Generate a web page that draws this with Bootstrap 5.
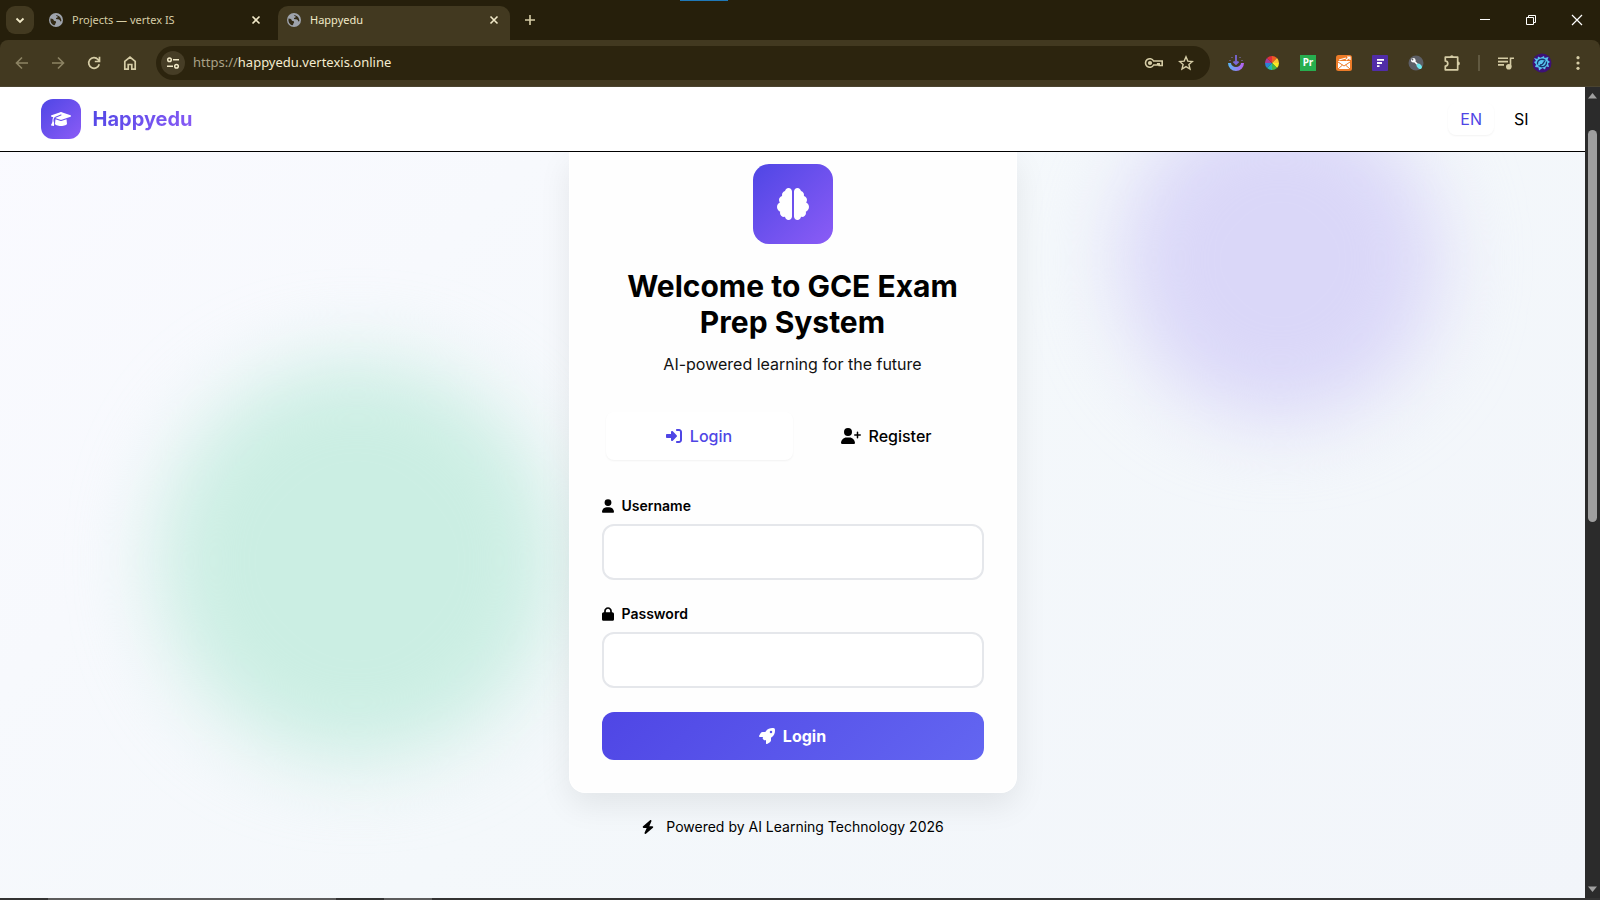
<!DOCTYPE html>
<html lang="en">
<head>
<meta charset="utf-8">
<meta name="viewport" content="width=device-width, initial-scale=1">
<title>Happyedu</title>
<link href="https://cdn.jsdelivr.net/npm/bootstrap@5.3.0/dist/css/bootstrap.min.css" rel="stylesheet">
<script defer src="https://cdn.jsdelivr.net/npm/bootstrap@5.3.0/dist/js/bootstrap.bundle.min.js"></script>
<style>
  :root { --indigo: #4f46e5; --violet: #8b5cf6; --strip: #261f0b; --bar: #423920; --cream: #d6cda6; }
  body { height: 100vh; font-family: Inter, "Liberation Sans", sans-serif; color: #000; background: var(--strip); overflow: hidden; }
  svg { display: block; flex: none; }
  button { color: inherit; }
  .ui-font { font-family: "Noto Sans", "Open Sans", sans-serif; }
  .plain { background: none; border: 0; padding: 0; display: flex; align-items: center; justify-content: center; }

  /* browser frame */
  .strip { height: 40px; padding: 6px 0 0 6px; color: var(--cream); font-size: 11px; }
  .tab-search { width: 28px; height: 28px; border-radius: 9px; background: var(--bar); color: #f1e9c8; }
  .win-tab { width: 232px; height: 34px; padding: 0 10px 6px 8px; gap: 8px; }
  .win-tab.idle { margin-left: 6px; width: 232px; }
  .win-tab.current { margin-left: 6px; background: var(--bar); color: #f1e9c8; border-radius: 10px 10px 0 0; }
  .win-tab svg { color: #9ea3ac; }
  .win-tab button svg { color: #f1e9c8; }
  .new-tab { width: 40px; height: 28px; }
  .win-btns { color: #fff; height: 28px; }
  .win-btns button { width: 46px; height: 28px; }
  .accent { left: 680px; top: 0; width: 48px; height: 1px; background: #1f78b8; }
  .toolbar { height: 47px; background: var(--bar); color: var(--cream); padding: 0 4px; border-bottom: 1px solid #4b4430; border-radius: 8px 8px 0 0; }
  .toolbar > .plain, .exts .plain { width: 36px; height: 34px; }
  .dim { opacity: .5; }
  .omni { height: 34px; border-radius: 17px; background: #2c240e; padding: 0 8px 0 5px; margin-left: 8px; margin-right: 8px; font-size: 13px; }
  .omni .plain { width: 32px; }
  .omni .site { width: 24px; height: 24px; border-radius: 50%; background: #463d26; margin-right: 8px; }
  .omni .scheme { color: #aaa287; }
  .omni input { background: none; border: 0; outline: 0; padding: 0; color: #f4ecd0; min-width: 0; }
  .divider { width: 2px; height: 16px; margin: 0 8px; background: #615940; }
  .pr { width: 16px; height: 16px; background: #27ae4f; color: #fff; font-size: 10px; line-height: 14px; font-weight: 700; }

  /* page */
  .view { min-height: 0; background: linear-gradient(135deg, #fafaff 0%, #f4f8fb 50%, #f2f5fa 100%); }
  .site-head { height: 65px; background: #fff; border-bottom: 1px solid #000; z-index: 2; }
  .head-inner { max-width: 1536px; padding: 0 16px; }
  .brand { gap: 12px; }
  .logo-box { width: 40px; height: 40px; border-radius: 12px; }
  .grad { background: linear-gradient(135deg, var(--indigo), var(--violet)); color: #fff; }
  .brand-name { font-size: 20px; font-weight: 700; line-height: 28px; background: linear-gradient(135deg, var(--indigo), var(--violet)); -webkit-background-clip: text; background-clip: text; color: transparent; }
  .lang { padding: 4px 12px; border-radius: 8px; font-size: 16px; line-height: 24px; }
  .raised { color: var(--indigo); background: #fff; box-shadow: 0 1px 2px rgba(0,0,0,.05); }
  .orb { border-radius: 50%; filter: blur(40px); }
  .orb-violet { width: 320px; height: 320px; right: 145px; top: 13px; background: #dad7f8; }
  .orb-green { width: 400px; height: 400px; left: 157px; bottom: 137px; background: #cbeee3; }
  .login-card { max-width: 448px; border: 1px solid #fff; border-top: 0; border-radius: 0 0 16px 16px; background: #fefefe; padding: 12px 32px 32px; box-shadow: 0 12px 32px rgba(0,0,0,.08); }
  .hero-icon { width: 80px; height: 80px; border-radius: 16px; margin-bottom: 24px; }
  h1 { font-size: 30px; line-height: 36px; font-weight: 700; margin-bottom: 12px; }
  .tagline { line-height: 24px; margin-bottom: 32px; color: #111; }
  .switcher { padding: 4px; margin-bottom: 32px; }
  .switcher button { height: 48px; border-radius: 8px; font-weight: 500; gap: 8px; }
  .field-label { font-size: 14px; line-height: 20px; font-weight: 600; gap: 8px; margin-bottom: 8px; }
  .field { height: 56px; border: 2px solid #e5e7eb; border-radius: 12px; background: #fff; margin-bottom: 24px; }
  .submit { height: 48px; border-radius: 12px; font-weight: 700; gap: 8px; color: #fff; background: linear-gradient(135deg, var(--indigo), #6366f1); }
  .powered { font-size: 14px; line-height: 20px; margin-top: 24px; gap: 11px; }
  .scroller { width: 15px; background: #2b2b2b; padding: 6px 0; color: #a0a0a0; }
  .thumb { width: 9px; flex: 0 0 49%; border-radius: 5px; background: #9f9f9f; margin-top: 31px; }
  .taskbar { height: 2px; background: #333; }
  .taskbar i { height: 2px; background: #5c5c5c; }
</style>
</head>
<body class="d-flex flex-column">
<svg width="0" height="0" class="position-absolute" aria-hidden="true">
  <symbol id="globe" viewBox="0 0 16 16"><circle cx="8" cy="8" r="7" fill="currentColor"/><path d="M2.500 6.500c2 .2 3 .6 3.200 1.800.2 1 1.600.5 2.200 1.200.7 1-.4 1.500-.6 2.400-.1.800-.8 1.200-1.400 1.300-2.500-.9-3.900-3.600-3.400-6.700zM7.500 2.800c1 .1.600 1.400 1.600 1.500 1.200.1.600 1.600-.5 1.500-1 0-.9 1.400.3 1.500 1.500.1 3 .2 3.200 1.500.1.900.8.600 1.300.2 0-2.500-1.600-4.700-3.700-5.500z" fill="#332b17"/></symbol>
  <symbol id="cross" viewBox="0 0 12 12"><path d="M2.500 2.500l7 7m0-7l-7 7" stroke="currentColor" stroke-width="1.600" fill="none"/></symbol>
</svg>

<header class="ui-font">
  <div class="strip d-flex position-relative">
    <span class="accent position-absolute"></span>
    <button class="plain tab-search" aria-label="Search tabs"><svg width="12" height="12" viewBox="0 0 12 12"><path d="M2.500 4.500L6 8l3.500-3.500" fill="none" stroke="currentColor" stroke-width="1.800"/></svg></button>
    <div class="win-tab idle d-flex align-items-center"><svg width="16" height="16"><use href="#globe"/></svg><span class="flex-grow-1">Projects — vertex IS</span><button class="plain" aria-label="Close tab"><svg width="12" height="12"><use href="#cross"/></svg></button></div>
    <div class="win-tab current d-flex align-items-center"><svg width="16" height="16"><use href="#globe"/></svg><span class="flex-grow-1">Happyedu</span><button class="plain" aria-label="Close tab"><svg width="12" height="12"><use href="#cross"/></svg></button></div>
    <button class="plain new-tab" aria-label="New tab"><svg width="12" height="12" viewBox="0 0 12 12"><path d="M6 1v10M1 6h10" stroke="currentColor" stroke-width="1.600"/></svg></button>
    <div class="win-btns d-flex ms-auto">
      <button class="plain" aria-label="Minimize"><svg width="12" height="12" viewBox="0 0 12 12"><path d="M1 5.500h10" stroke="currentColor"/></svg></button>
      <button class="plain" aria-label="Restore"><svg width="12" height="12" viewBox="0 0 12 12" fill="none" stroke="currentColor"><path d="M1.500 3.500h7v7h-7zM3.500 3V1.500h7v7H9"/></svg></button>
      <button class="plain" aria-label="Close"><svg width="12" height="12" viewBox="0 0 12 12"><path d="M1 1l10 10M11 1L1 11" stroke="currentColor" stroke-width="1.200"/></svg></button>
    </div>
  </div>

  <div class="toolbar d-flex align-items-center">
    <button class="plain dim" aria-label="Back"><svg width="16" height="16" viewBox="0 0 16 16" fill="none" stroke="currentColor" stroke-width="1.600"><path d="M14 8H3m5-5.500L2.500 8 8 13.500"/></svg></button>
    <button class="plain dim" aria-label="Forward"><svg width="16" height="16" viewBox="0 0 16 16" fill="none" stroke="currentColor" stroke-width="1.600"><path d="M2 8h11M8 2.500L13.500 8 8 13.500"/></svg></button>
    <button class="plain" aria-label="Reload"><svg width="16" height="16" viewBox="0 0 16 16" fill="none" stroke="currentColor" stroke-width="1.700"><path d="M13.200 9.200A5.300 5.300 0 1 1 12 4.500l1.300 1.600M13.500 1.800v4.700H8.800"/></svg></button>
    <button class="plain" aria-label="Home"><svg width="16" height="16" viewBox="0 0 16 16" fill="none" stroke="currentColor" stroke-width="1.700"><path d="M2.800 14.200V6.300L8 2l5.200 4.300v7.900H9.800V9.500H6.200v4.700z"/></svg></button>
    <div class="omni d-flex align-items-center flex-grow-1">
      <button class="plain site" aria-label="Site information"><svg width="14" height="14" viewBox="0 0 14 14" fill="none" stroke="#f1e9c8" stroke-width="1.500"><circle cx="3.500" cy="3.800" r="1.800"/><path d="M7 3.800h6M1 10.200h6"/><circle cx="10.500" cy="10.200" r="1.800"/></svg></button>
      <label for="address" class="scheme">https://</label><input id="address" class="flex-grow-1" type="text" value="happyedu.vertexis.online" spellcheck="false">
      <button class="plain" aria-label="Passwords"><svg width="20" height="16" viewBox="0 0 20 16" fill="none" stroke="currentColor" stroke-width="1.600"><path d="M9.600 6H18.200v4.500h-3V8.700h-1.500V10H9.600A4.300 4.300 0 1 1 9.600 6z"/><circle cx="6" cy="8" r="1.300" fill="currentColor"/></svg></button>
      <button class="plain" aria-label="Bookmark"><svg width="16" height="16" viewBox="0 0 16 16" fill="none" stroke="currentColor" stroke-width="1.400"><path d="M8 1.800l1.800 4.300 4.600.4-3.500 3 1.100 4.500L8 11.600 4 14l1.100-4.500-3.500-3 4.600-.4z"/></svg></button>
    </div>
    <div class="exts d-flex align-items-center">
      <button class="plain" aria-label="Downloader"><svg width="16" height="16" viewBox="0 0 16 16"><defs><linearGradient id="dl"><stop stop-color="#58b8f5"/><stop offset="1" stop-color="#b85cf0"/></linearGradient></defs><path d="M0 8h3a5 4 0 0 0 10 0h3a8 8 0 0 1-16 0z" fill="url(#dl)"/><path d="M8 0v8M5.500 6.500L8 9l2.500-2.500" stroke="#7b68d8" stroke-width="1.800" fill="none"/><path d="M1.500 5.500h1M3.500 2.500h1M11.500 2.500h1M13.500 5.500h1" stroke="#8478ca" stroke-width="1.200"/></svg></button>
      <button class="plain" aria-label="Color picker"><svg width="16" height="16" viewBox="0 0 16 16"><path d="M8 8V1a7 7 0 0 1 5 2z" fill="#ee5a24"/><path d="M8 8l5-5a7 7 0 0 1 2 5z" fill="#fbc531"/><path d="M8 8h7a7 7 0 0 1-2 5z" fill="#f7ea25"/><path d="M8 8l5 5a7 7 0 0 1-5 2z" fill="#43b649"/><path d="M8 8v7a7 7 0 0 1-5-2z" fill="#26b7b0"/><path d="M8 8l-5 5a7 7 0 0 1-2-5z" fill="#2c82d8"/><path d="M8 8H1a7 7 0 0 1 2-5z" fill="#a53b9a"/><path d="M8 8L3 3a7 7 0 0 1 5-2z" fill="#e02d3c"/></svg></button>
      <button class="plain" aria-label="Pr"><span class="pr">Pr</span></button>
      <button class="plain" aria-label="Mail"><svg width="16" height="16" viewBox="0 0 16 16"><rect width="16" height="16" rx="2.500" fill="#ec7b28"/><path d="M2 6h12v8H2z" fill="#fff"/><path d="M2 7l6 4 6-4M2 14l4.500-4M14 14l-4.500-4" stroke="#ec7b28" fill="none"/><path d="M3 5l7-2M10 5l4-3m-3 0h3v3" stroke="#fff" stroke-width="1.200" fill="none"/></svg></button>
      <button class="plain" aria-label="Forms"><svg width="16" height="16" viewBox="0 0 16 16"><rect width="16" height="16" rx="1" fill="#512da8"/><path d="M5 4.800h7M5 8h5M5 11.200h2.500" stroke="#fff" stroke-width="1.800"/></svg></button>
      <button class="plain" aria-label="Tools"><svg width="16" height="16" viewBox="0 0 16 16"><circle cx="8" cy="8" r="7.500" fill="#5d5f66"/><path d="M5 5l5 5" stroke="#fff" stroke-width="1.600"/><circle cx="5.300" cy="5.300" r="2.300" fill="#fff"/><circle cx="4.500" cy="4.500" r=".9" fill="#5d5f66"/><path d="M10.500 10.500l1.500 1.500" stroke="#6feaf0" stroke-width="4" stroke-linecap="round"/></svg></button>
      <button class="plain" aria-label="Extensions"><svg width="18" height="18" viewBox="0 0 18 18" fill="none" stroke="currentColor" stroke-width="1.700"><path d="M2.300 3.200h12.400v12.600H2.300v-3.800a2.500 2.500 0 0 0 0-5z" stroke-linejoin="round"/><path d="M7 3a1.800 1.800 0 0 1 3.600 0zM15 7.500a1.900 1.900 0 0 1 0 3.800z" fill="currentColor" stroke="none"/></svg></button>
      <span class="divider"></span>
      <button class="plain" aria-label="Media"><svg width="18" height="16" viewBox="0 0 18 16" fill="none" stroke="currentColor" stroke-width="1.600"><path d="M1 3.300h10M1 6.600h10M1 9.900h6M13.500 12V3.300H17"/><circle cx="11.800" cy="11.700" r="2" fill="currentColor"/></svg></button>
      <button class="plain" aria-label="Profile"><svg width="20" height="20" viewBox="0 0 20 20"><circle cx="10" cy="10" r="9.500" fill="#3d1178"/><path d="M2 5l3.500 1L6 3.500l2.500 1.200L12 3l.5 2 4-1-1 3 2.500 2-2 1.500 1 3.500-3-.5-1 3-2.500-1.500L7 17.500l-.5-3L3 14l1-2.500L2 9l2-1z" fill="#58c4ef"/><path d="M5.500 11.500c-.5-5 4.500-6.500 8-4M14.500 8.500c.5 5-4.500 6.500-8 4M8 12c4 0 4-4 5-4.500" stroke="#18346f" stroke-width="1.300" fill="none"/></svg></button>
      <button class="plain" aria-label="Menu"><svg width="16" height="16" viewBox="0 0 16 16" fill="currentColor"><circle cx="8" cy="2.700" r="1.600"/><circle cx="8" cy="8" r="1.600"/><circle cx="8" cy="13.300" r="1.600"/></svg></button>
    </div>
  </div>
</header>

<div class="d-flex flex-grow-1 view">
  <div class="d-flex flex-column flex-grow-1 position-relative overflow-hidden">
    <nav class="site-head position-relative flex-shrink-0">
      <div class="head-inner d-flex align-items-center mx-auto h-100">
        <a href="#" class="brand d-flex align-items-center text-decoration-none">
          <span class="logo-box grad d-flex align-items-center justify-content-center"><svg width="20" height="16" viewBox="0 0 640 512" fill="currentColor"><path d="M320 32c-8.100 0-16.100 1.400-23.700 4.100L15.800 137.400C6.300 140.900 0 149.900 0 160s6.300 19.100 15.800 22.600l57.900 20.900C57.300 229.300 48 259.800 48 291.900v28.100c0 28.400-10.800 57.700-22.300 80.800c-6.500 13-13.900 25.800-22.500 37.600C0 442.700-.9 448.300 .9 453.400s6 8.900 11.200 10.200l64 16c4.200 1.100 8.700 .3 12.400-2s6.300-6.100 7.100-10.400c8.600-42.800 4.300-81.200-2.100-108.700C90.300 344.300 86 329.800 80 316.500V291.900c0-30.200 10.200-58.700 27.900-81.500c12.900-15.500 29.600-28 49.200-35.700l157-61.700c8.200-3.200 17.500 .8 20.700 9s-.8 17.500-9 20.700l-157 61.700c-12.400 4.900-23.300 12.400-32.200 21.600l159.600 57.600c7.600 2.700 15.600 4.100 23.700 4.100s16.100-1.400 23.700-4.100L624.200 182.600c9.500-3.400 15.800-12.500 15.800-22.600s-6.300-19.100-15.800-22.600L343.700 36.100C336.100 33.400 328.100 32 320 32zM128 408c0 35.300 86 72 192 72s192-36.700 192-72L496.700 262.600 354.500 314c-11.100 4-22.800 6-34.500 6s-23.500-2-34.500-6L143.300 262.600 128 408z"/></svg></span>
          <span class="brand-name">Happyedu</span>
        </a>
        <div class="d-flex gap-2 ms-auto pe-1">
          <button class="plain lang raised">EN</button>
          <button class="plain lang">SI</button>
        </div>
      </div>
    </nav>

    <div class="orb orb-violet position-absolute"></div>
    <div class="orb orb-green position-absolute"></div>

    <main class="position-relative d-flex flex-column align-items-center">
      <section class="login-card w-100">
        <div class="hero-icon grad d-flex align-items-center justify-content-center mx-auto"><svg width="32" height="32" viewBox="0 0 512 512" fill="currentColor"><path d="M184 0c30.900 0 56 25.100 56 56V456c0 30.900-25.100 56-56 56c-28.900 0-52.700-21.900-55.700-50.100c-5.200 1.400-10.700 2.100-16.300 2.100c-35.300 0-64-28.700-64-64c0-7.400 1.300-14.600 3.600-21.200C21.400 367.400 0 338.200 0 304c0-31.900 18.700-59.500 45.800-72.300C37.100 220.800 32 207 32 192c0-30.700 21.600-56.300 50.400-62.600C80.800 123.900 80 118 80 112c0-29.900 20.600-55.100 48.300-62.100C131.300 21.900 155.100 0 184 0zM328 0c28.900 0 52.600 21.900 55.700 49.900c27.800 7 48.300 32.100 48.300 62.100c0 6-.8 11.900-2.400 17.400c28.800 6.200 50.400 31.900 50.400 62.600c0 15-5.100 28.800-13.800 39.700C493.300 244.500 512 272.100 512 304c0 34.200-21.400 63.400-51.600 74.800c2.300 6.600 3.600 13.800 3.600 21.200c0 35.300-28.700 64-64 64c-5.600 0-11.100-.7-16.300-2.100c-3 28.200-26.800 50.100-55.700 50.100c-30.900 0-56-25.100-56-56V56c0-30.900 25.100-56 56-56z"/></svg></div>
        <h1 class="text-center">Welcome to GCE Exam Prep System</h1>
        <p class="tagline text-center">AI-powered learning for the future</p>
        <div class="switcher d-flex">
          <button class="plain raised w-50"><svg width="16" height="16" viewBox="0 0 512 512" fill="currentColor"><path d="M217.900 105.900L340.700 228.700c7.200 7.200 11.300 17.100 11.300 27.300s-4.100 20.100-11.300 27.300L217.900 406.100c-6.400 6.400-15 9.900-24 9.900c-18.700 0-33.900-15.200-33.900-33.900l0-62.100L32 320c-17.700 0-32-14.300-32-32l0-64c0-17.700 14.300-32 32-32l128 0 0-62.100c0-18.700 15.200-33.900 33.900-33.900c9 0 17.600 3.600 24 9.900zM352 416l64 0c17.700 0 32-14.300 32-32l0-256c0-17.700-14.300-32-32-32l-64 0c-17.700 0-32-14.300-32-32s14.300-32 32-32l64 0c53 0 96 43 96 96l0 256c0 53-43 96-96 96l-64 0c-17.700 0-32-14.300-32-32s14.300-32 32-32z"/></svg>Login</button>
          <button class="plain w-50"><svg width="20" height="16" viewBox="0 0 640 512" fill="currentColor"><path d="M96 128a128 128 0 1 1 256 0A128 128 0 1 1 96 128zM0 482.300C0 383.800 79.800 304 178.300 304h91.400C368.200 304 448 383.800 448 482.300c0 16.400-13.300 29.700-29.700 29.700H29.700C13.300 512 0 498.700 0 482.300zM504 312V248H440c-13.300 0-24-10.700-24-24s10.700-24 24-24h64V136c0-13.300 10.700-24 24-24s24 10.700 24 24v64h64c13.300 0 24 10.700 24 24s-10.700 24-24 24H552v64c0 13.300-10.700 24-24 24s-24-10.700-24-24z"/></svg>Register</button>
        </div>
        <form>
          <label for="username" class="field-label d-flex align-items-center"><svg width="12" height="14" viewBox="0 0 448 512"><path d="M224 256A128 128 0 1 0 224 0a128 128 0 1 0 0 256zm-45.700 48C79.800 304 0 383.800 0 482.300C0 498.700 13.300 512 29.700 512H418.300c16.400 0 29.700-13.300 29.700-29.700C448 383.800 368.200 304 269.700 304H178.300z"/></svg>Username</label>
          <input id="username" type="text" class="form-control field">
          <label for="password" class="field-label d-flex align-items-center"><svg width="12" height="14" viewBox="0 0 448 512"><path d="M144 144v48H304V144c0-44.200-35.800-80-80-80s-80 35.800-80 80zM80 192V144C80 64.500 144.500 0 224 0s144 64.500 144 144v48h16c35.300 0 64 28.700 64 64V448c0 35.300-28.700 64-64 64H64c-35.300 0-64-28.700-64-64V256c0-35.300 28.700-64 64-64H80z"/></svg>Password</label>
          <input id="password" type="password" class="form-control field">
          <button type="button" class="plain submit w-100"><svg width="16" height="16" viewBox="0 0 512 512" fill="currentColor"><path d="M156.600 384.900L125.700 354c-8.500-8.500-11.500-20.800-7.700-32.200c3-8.900 7-20.500 11.800-33.800L24 288c-8.600 0-16.600-4.600-20.900-12.100s-4.200-16.700 .2-24.100l52.500-88.500c13-21.900 36.500-35.300 61.900-35.300l82.300 0c2.400-4 4.800-7.700 7.200-11.300C289.100-4.100 411.100-8.100 483.900 5.300c11.600 2.100 20.600 11.200 22.800 22.800c13.400 72.900 9.300 194.800-111.400 276.700c-3.500 2.400-7.300 4.800-11.300 7.200v82.300c0 25.400-13.400 49-35.300 61.900l-88.500 52.500c-7.400 4.400-16.600 4.500-24.100 .2s-12.100-12.200-12.100-20.900V380.800c-14.100 4.900-26.400 8.900-35.700 11.900c-11.200 3.600-23.400 .5-31.800-7.800zM384 168a40 40 0 1 0 0-80 40 40 0 1 0 0 80z"/></svg>Login</button>
        </form>
      </section>
      <p class="powered d-flex align-items-center mb-0"><svg width="14" height="14" viewBox="0 0 448 512"><path d="M349.400 44.600c5.900-13.700 1.500-29.700-10.600-38.500s-28.600-8-39.900 1.800l-256 224c-10 8.800-13.600 22.900-8.900 35.300S50.700 288 64 288H175.500L98.600 467.400c-5.900 13.700-1.500 29.700 10.600 38.500s28.600 8 39.900-1.800l256-224c10-8.800 13.600-22.900 8.900-35.300s-16.600-20.700-30-20.700H272.500L349.400 44.600z"/></svg>Powered by AI Learning Technology 2026</p>
    </main>
  </div>
  <div class="scroller d-flex flex-column align-items-center flex-shrink-0">
    <svg width="9" height="6" viewBox="0 0 9 6" fill="currentColor"><path d="M0 5.500L4.500 0 9 5.500z"/></svg>
    <div class="thumb"></div>
    <svg class="mt-auto" width="9" height="6" viewBox="0 0 9 6" fill="currentColor"><path d="M0 .5L4.500 6 9 .5z"/></svg>
  </div>
</div>
<footer class="taskbar d-flex flex-shrink-0"><i style="width:3%;background:none"></i><i style="width:18%"></i><i style="width:3%;background:none"></i><i style="width:3%"></i></footer>
</body>
</html>
